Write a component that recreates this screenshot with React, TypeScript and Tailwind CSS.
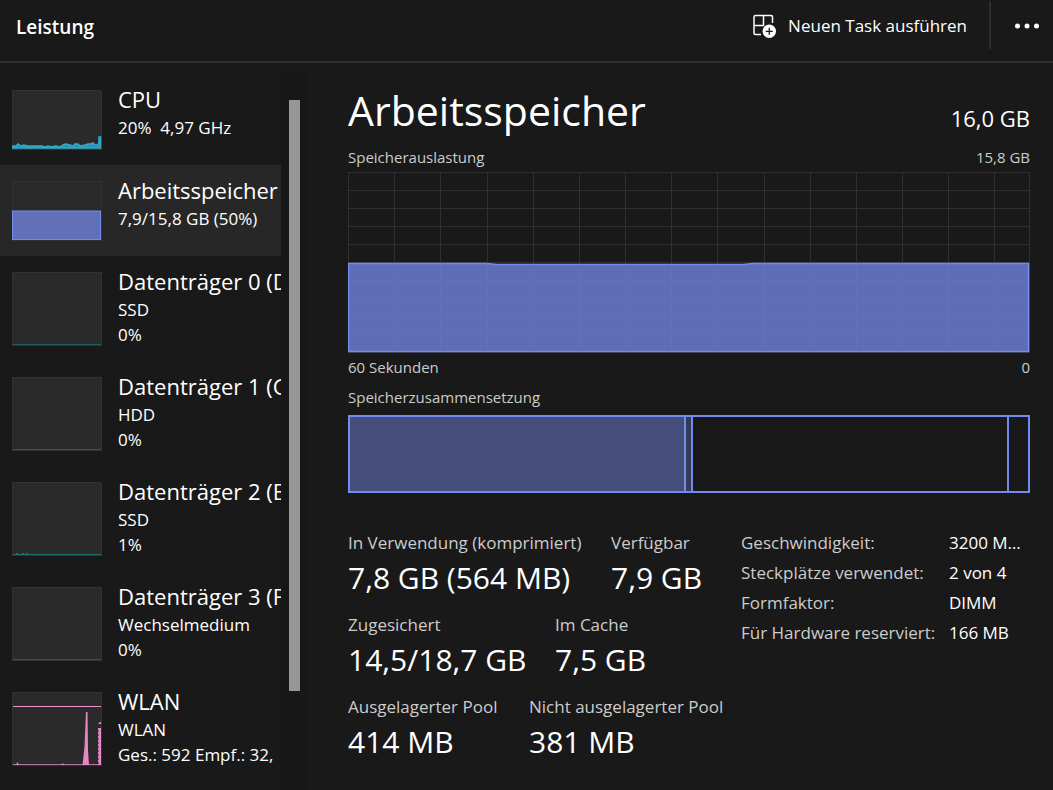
import { ReactNode } from "react";

type Device = {
  id: string;
  title: string;
  lines: string[];
  graph: ReactNode;
  compact?: boolean;
};

function IdleDisk({ color, blips }: { color: string; blips?: boolean }) {
  return (
    <>
      <path d="M1 72.5H89" stroke={color} />
      {blips && <path d="M4 71.5H6M10 71.5H12M14 71.5H16" stroke={color} />}
    </>
  );
}

const DEVICES: Device[] = [
  {
    id: "cpu",
    title: "CPU",
    lines: ["20%  4,97 GHz"],
    compact: true,
    graph: (
      <path
        d="M0 58V56H4L6 54L9 56L12 55L15 56H30L33 57L36 56L39 57L44 56L48 57L51 55L54 54L58 55L61 56L63 54H66L68 56L73 55L76 54H79L81 53L83 55H86L87 52V47H88.5V58Z"
        fill="#2c95ad"
        stroke="#30accb"
        strokeWidth="1.5"
      />
    ),
  },
  {
    id: "memory",
    title: "Arbeitsspeicher",
    lines: ["7,9/15,8 GB (50%)"],
    compact: true,
    graph: <rect x="0.5" y="30" width="88" height="28.5" fill="#6170b8" stroke="#748bee" />,
  },
  {
    id: "disk0",
    title: "Datenträger 0 (D:)",
    lines: ["SSD", "0%"],
    graph: <IdleDisk color="#245a5a" />,
  },
  {
    id: "disk1",
    title: "Datenträger 1 (G:)",
    lines: ["HDD", "0%"],
    graph: <IdleDisk color="#245a5a" />,
  },
  {
    id: "disk2",
    title: "Datenträger 2 (E:)",
    lines: ["SSD", "1%"],
    graph: <IdleDisk color="#217070" blips />,
  },
  {
    id: "disk3",
    title: "Datenträger 3 (F:)",
    lines: ["Wechselmedium", "0%"],
    graph: <IdleDisk color="#245a5a" />,
  },
  {
    id: "wlan",
    title: "WLAN",
    lines: ["WLAN", "Ges.: 592 Empf.: 32,"],
    graph: (
      <>
        <path d="M1 14.5H89" stroke="#f08cd0" />
        <path d="M1 72.5H89" stroke="#b06f9c" />
        <path d="M4 73L5.5 70L7 73ZM49 73L51 71L52 73ZM70.5 73L72.500 55L74 20H75.500L76 58L77 73ZM86 73V36H89V73Z" fill="#e686c5" />
        <path d="M86.5 38V72" stroke="#7d5370" strokeDasharray="2 2" />
        <path d="M86 32L88 30H89V32Z" fill="#f08cd0" />
      </>
    ),
  },
];

const STATS = [
  [
    { label: "In Verwendung (komprimiert)", value: "7,8 GB (564 MB)", width: "w-[263px]" },
    { label: "Verfügbar", value: "7,9 GB", width: "" },
  ],
  [
    { label: "Zugesichert", value: "14,5/18,7 GB", width: "w-[207px]" },
    { label: "Im Cache", value: "7,5 GB", width: "" },
  ],
  [
    { label: "Ausgelagerter Pool", value: "414 MB", width: "w-[181px]" },
    { label: "Nicht ausgelagerter Pool", value: "381 MB", width: "" },
  ],
];

const SPECS = [
  ["Geschwindigkeit:", "3200 MT/s"],
  ["Steckplätze verwendet:", "2 von 4"],
  ["Formfaktor:", "DIMM"],
  ["Für Hardware reserviert:", "166 MB"],
];

const GRID_X = [46, 92, 139, 185, 231, 277, 323, 369, 416, 462, 508, 554, 600, 646];
const GRID_Y = [18, 36, 54, 72, 90, 108, 126, 144, 162];

function NewTaskIcon() {
  return (
    <svg viewBox="0 0 24 24" className="h-6 w-6 shrink-0" fill="none" aria-hidden="true">
      <path
        d="M9 20.5H3.5A1.5 1.5 0 0 1 2 19V3A1.500 1.5 0 0 1 3.5 1.5H19A1.500 1.5 0 0 1 20.5 3V9M2 11.5H11.5V1.5"
        stroke="white"
        strokeWidth="1.5"
      />
      <circle cx="17.3" cy="17.3" r="6.7" fill="white" />
      <path d="M17.3 13.8V20.8M13.8 17.3H20.8" stroke="#191919" strokeWidth="1.3" />
    </svg>
  );
}

function DeviceRow({ device, selected }: { device: Device; selected: boolean }) {
  const height = device.compact ? 60 : 74;
  return (
    <button
      aria-pressed={selected}
      className={`flex w-full items-start gap-4 overflow-hidden pb-[15px] pl-3 text-left ${
        selected ? "bg-[#272727]" : ""
      }`}
    >
      <svg
        width="90"
        height={height}
        viewBox={`0 0 90 ${height}`}
        className="mt-4 shrink-0 bg-[#2a2a2a]"
        aria-hidden="true"
      >
        <rect x="0.5" y="0.5" width="89" height={height - 1} fill="none" stroke="#323232" />
        {device.graph}
      </svg>
      <span className="h-0 pt-[9px] whitespace-pre">
        <span className="block text-[22px] leading-8">{device.title}</span>
        {device.lines.map((line) => (
          <span key={line} className="block text-[17px] leading-[25px]">
            {line}
          </span>
        ))}
      </span>
    </button>
  );
}

function UsageChart() {
  return (
    <svg
      viewBox="0 0 682 181"
      preserveAspectRatio="none"
      className="block h-[181px] w-full"
      role="img"
      aria-label="Speicherauslastung"
    >
      <g stroke="#303030" shapeRendering="crispEdges">
        <rect x="0.5" y="0.5" width="681" height="180" fill="none" />
        {GRID_X.map((x) => (
          <path key={x} d={`M${x + 0.5} 0V181`} />
        ))}
        {GRID_Y.map((y) => (
          <path key={y} d={`M0 ${y + 0.5}H682`} />
        ))}
      </g>
      <path
        d="M0.5 179.5V91.5H139L149 92.5H395L405 91.5H680.5V179.5Z"
        fill="#6c7cd2"
        fillOpacity="0.85"
        stroke="#748bee"
        strokeWidth="1.5"
      />
    </svg>
  );
}

export default function App() {
  return (
    <div className="flex min-h-screen flex-col overflow-hidden bg-[#191919] font-['Segoe_UI','Open_Sans',sans-serif] text-white">
      <header className="flex h-[63px] shrink-0 items-start justify-between border-b-2 border-[#2d2d2d] pl-4">
        <h1 className="pt-[11px] text-[19px] leading-8 font-semibold">Leistung</h1>
        <div className="flex h-[51px] items-center">
          <button className="flex h-full items-center gap-3 pr-[22px] text-[17px]">
            <NewTaskIcon />
            Neuen Task ausführen
          </button>
          <div className="mb-px h-12 w-0.5 bg-[#2d2d2d]" />
          <button aria-label="Weitere Optionen" className="flex h-full items-center pr-[14px] pl-6">
            <svg viewBox="0 0 24 6" className="h-1.5 w-6" fill="white">
              <circle cx="2.5" cy="3" r="2.5" />
              <circle cx="12" cy="3" r="2.5" />
              <circle cx="21.5" cy="3" r="2.5" />
            </svg>
          </button>
        </div>
      </header>

      <div className="flex flex-1">
        {/* Device list and its scrollbar */}
        <aside className="flex w-[307px] shrink-0 pt-[11px]">
          <nav className="w-[281px] shrink-0">
            {DEVICES.map((device) => (
              <DeviceRow key={device.id} device={device} selected={device.id === "memory"} />
            ))}
          </nav>
          <div className="flex-1 bg-[#171717] pt-[26px] pl-2">
            <div className="h-[591px] w-[11px] bg-[#969696]" />
          </div>
        </aside>

        <main className="min-w-0 flex-1 pr-[23px] pl-[41px] text-[#cccccc]">
          <div className="flex items-end justify-between pt-[15px] text-white">
            <h2 className="text-[41px] leading-[64px]">Arbeitsspeicher</h2>
            <span className="text-[22px] leading-[48px]">16,0 GB</span>
          </div>
          <div className="flex justify-between pt-1 text-[15px] leading-[22px]">
            <span>Speicherauslastung</span>
            <span>15,8 GB</span>
          </div>
          <div className="pt-1">
            <UsageChart />
          </div>
          <div className="flex justify-between pt-[3px] text-[15px] leading-[22px]">
            <span>60 Sekunden</span>
            <span>0</span>
          </div>
          <h3 className="pt-2 text-[15px] leading-[22px]">Speicherzusammensetzung</h3>
          <div className="mt-[7px] flex h-[78px] border-2 border-[#748bee]">
            <div className="w-[336px] border-r-2 border-[#748bee] bg-[#454e7b]" />
            <div className="w-[7px] border-r-2 border-[#748bee] bg-[#343a58]" />
            <div className="flex-1" />
            <div className="w-[21px] border-l-2 border-[#748bee]" />
          </div>

          <div className="flex pt-[35px]">
            <div className="w-[393px] shrink-0 pt-px">
              {STATS.map((row) => (
                <dl key={row[0].label} className="flex pb-[13px] whitespace-nowrap">
                  {row.map((stat) => (
                    <div key={stat.label} className={stat.width}>
                      <dt className="text-[17px] leading-7">{stat.label}</dt>
                      <dd className="text-[30px] leading-[41px] text-white">{stat.value}</dd>
                    </div>
                  ))}
                </dl>
              ))}
            </div>
            <dl className="min-w-0 flex-1 text-[17px] leading-[30px]">
              {SPECS.map(([label, value]) => (
                <div key={label} className="flex">
                  <dt className="w-52 shrink-0 whitespace-nowrap">{label}</dt>
                  <dd className="min-w-0 flex-1 truncate text-white">{value}</dd>
                </div>
              ))}
            </dl>
          </div>
        </main>
      </div>
    </div>
  );
}
